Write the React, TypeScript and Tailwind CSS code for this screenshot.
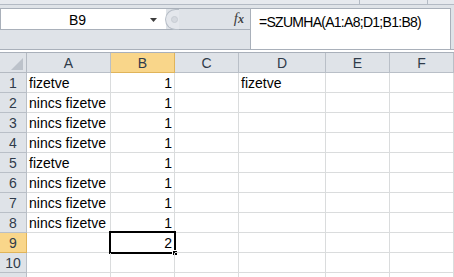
import React from "react";

const cols = [
  { l: "A", w: "w-[84px]" },
  { l: "B", w: "w-[64px]" },
  { l: "C", w: "w-[64px]" },
  { l: "D", w: "w-[87px]" },
  { l: "E", w: "w-[64px]" },
  { l: "F", w: "w-[64px]" },
];

const data: string[][] = [
  ["fizetve", "1", "", "fizetve", "", ""],
  ["nincs fizetve", "1", "", "", "", ""],
  ["nincs fizetve", "1", "", "", "", ""],
  ["nincs fizetve", "1", "", "", "", ""],
  ["fizetve", "1", "", "", "", ""],
  ["nincs fizetve", "1", "", "", "", ""],
  ["nincs fizetve", "1", "", "", "", ""],
  ["nincs fizetve", "1", "", "", "", ""],
  ["", "2", "", "", "", ""],
  ["", "", "", "", "", ""],
  ["", "", "", "", "", ""],
];

const font = { fontFamily: '"Liberation Sans", Arial, sans-serif' };

export default function App() {
  return (
    <div className="w-[454px] h-[277px] overflow-hidden bg-white text-black" style={font}>
      {/* top strip */}
      <div className="h-[5px] bg-[#e6e9ee] border-b border-[#b3bac4] flex">
        <div className="w-[359px]" />
        <div className="w-px bg-[#b3bac4]" />
        <div className="w-[67px]" />
        <div className="w-px bg-[#b3bac4]" />
      </div>
      {/* formula bar region */}
      <div className="h-[45px] bg-[#dfe3e8] border-b border-[#a9b0ba] flex pt-[3px]">
        <div className="w-[250px] flex flex-col">
          <div className="h-[22px] flex border-y border-[#a9b0ba]">
            {/* name box */}
            <div className="w-[166px] bg-white border-l border-[#a9b0ba] flex items-center">
              <div className="flex-1 text-center text-[14px] leading-none pt-[2px] pl-[4px]">B9</div>
              <svg width="7" height="4" viewBox="0 0 7 4" className="mr-[9px] mt-[1px]">
                <path d="M0 0 H7 L3.5 4 Z" fill="#3c3c3c" />
              </svg>
            </div>
            {/* splitter + fx */}
            <div className="flex-1 flex items-center">
              <div className="w-[14px] h-[21px] -ml-[1px] rounded-l-full border border-r-0 border-[#b7bec7] bg-[#e4e7ec] flex items-center justify-end pr-[1px]">
                <div className="w-[7px] h-[7px] rounded-full bg-[#d5d9df] border border-[#c7ccd3]" />
              </div>
              <div className="flex-1" />
              <div
                className="text-[15px] italic leading-none text-[#404040] mr-[6px] pb-[1px]"
                style={{ fontFamily: '"Liberation Serif", "Times New Roman", serif' }}
              >
                f<span className="text-[12px] font-bold">x</span>
              </div>
            </div>
          </div>
        </div>
        {/* formula input */}
        <div className="w-[201px] h-[42px] bg-white border border-[#a9b0ba] pl-[8px] pt-[5px]">
          <div className="text-[14px] leading-[16px] tracking-[-0.72px] whitespace-nowrap">=SZUMHA(A1:A8;D1;B1:B8)</div>
        </div>
        <div className="flex-1" />
      </div>
      {/* gap strip */}
      <div className="h-[3px] bg-white border-b border-[#a9b0ba]" />
      {/* header row */}
      <div className="flex h-[20px]">
        <div className="w-[27px] bg-[#dfe3e8] border-r border-b border-[#b4bac2] flex items-end justify-end pr-[3px] pb-[2px]">
          <svg width="12" height="12" viewBox="0 0 12 12">
            <path d="M12 0 V12 H0 Z" fill="#bcc2ca" />
          </svg>
        </div>
        {cols.map((c) => (
          <div
            key={c.l}
            className={`${c.w} border-r border-b flex items-center justify-center text-[14px] leading-none text-[#2f3b4a] ${
              c.l === "B" ? "bg-[#f9d68a] border-[#e0b45a]" : "bg-[#dfe3e8] border-[#b9bfc7]"
            }`}
          >
            {c.l}
          </div>
        ))}
      </div>
      {/* rows */}
      {data.map((row, i) => (
        <div key={i} className="flex h-[20px]">
          <div
            className={`w-[27px] border-r border-b flex items-center justify-center text-[14px] leading-none text-[#2f3b4a] ${
              i === 8 ? "bg-[#f9d68a] border-[#e0b45a]" : "bg-[#dfe3e8] border-[#b9bfc7]"
            }`}
          >
            {i < 10 ? i + 1 : ""}
          </div>
          {cols.map((c, j) => {
            const v = row[j];
            const num = v !== "" && !isNaN(Number(v));
            const sel = i === 8 && j === 1;
            return (
              <div
                key={c.l}
                className={`${c.w} relative border-r border-b border-[#dadcdd] flex items-end pb-[2px] text-[14px] leading-none whitespace-nowrap ${
                  num ? "justify-end pr-[2px]" : "justify-start pl-[2px]"
                }`}
              >
                {v}
                {sel && (
                  <div className="absolute inset-[-2px] border-2 border-black">
                    <div className="absolute right-[-4px] bottom-[-4px] w-[6px] h-[6px] bg-black border border-white" />
                  </div>
                )}
              </div>
            );
          })}
        </div>
      ))}
    </div>
  );
}
